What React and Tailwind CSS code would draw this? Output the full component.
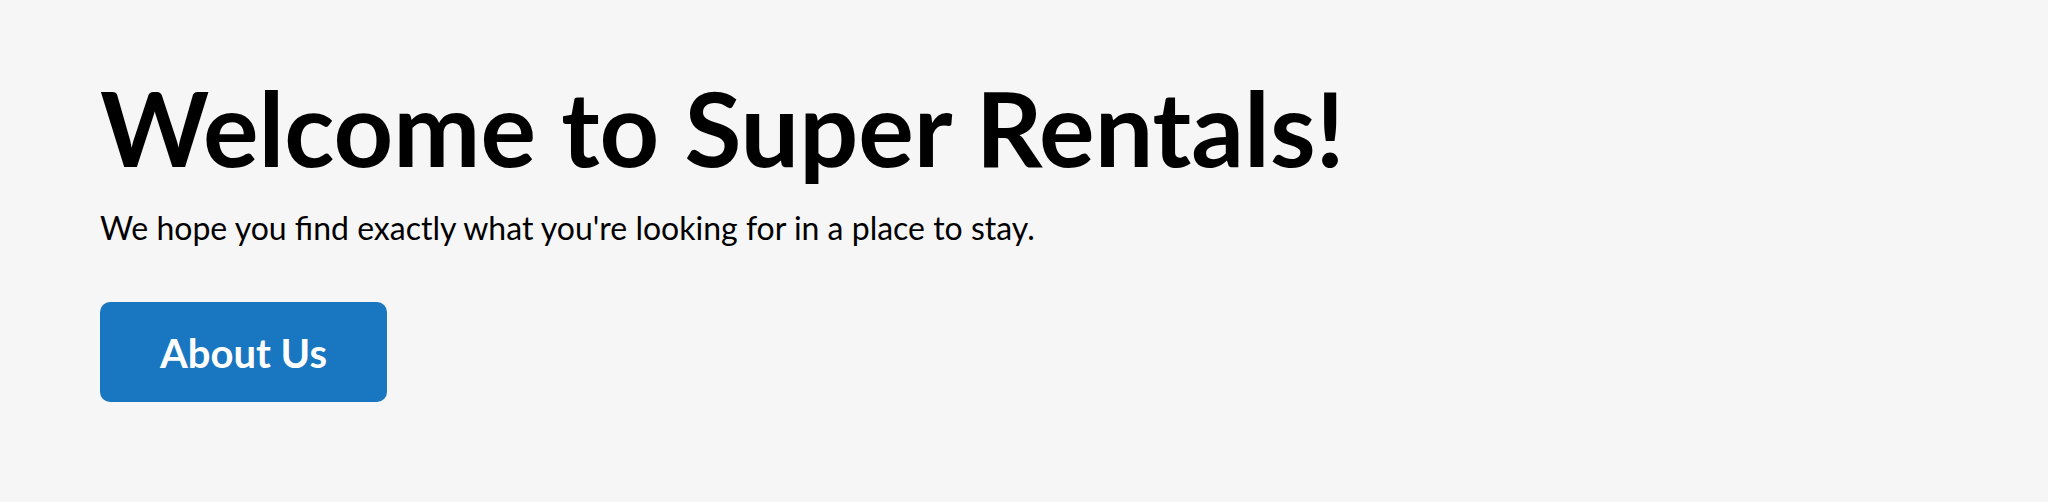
export default function App() {
  return (
    <main className="min-h-screen bg-[#f6f6f6] px-[100px] pt-[71px] pb-[100px] font-['Lato',sans-serif] text-black">
      <h1 className="text-[104px] leading-[112px] font-bold">Welcome to Super Rentals!</h1>
      <p className="mt-[25px] text-[32px] leading-[40px]">
        We hope you find exactly what you're looking for in a place to stay.
      </p>
      <a
        href="#about"
        className="mt-[54px] inline-block rounded-[10px] bg-[#1976c0] px-[60px] pt-[27px] pb-[25px] text-[40px] leading-[48px] font-bold text-white"
      >
        About Us
      </a>
    </main>
  );
}
